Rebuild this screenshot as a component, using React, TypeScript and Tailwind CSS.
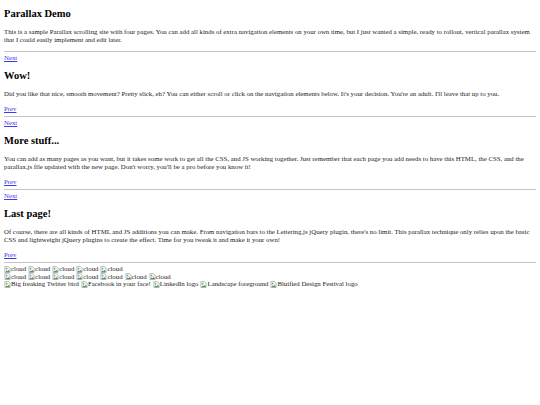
const sections = [
  {
    id: 'one',
    title: 'Parallax Demo',
    text: 'This is a sample Parallax scrolling site with four pages. You can add all kinds of extra navigation elements on your own time, but I just wanted a simple, ready to rollout, vertical parallax system that I could easily implement and edit later.',
    prev: false,
    next: false,
  },
  {
    id: 'two',
    title: 'Wow!',
    text: "Did you like that nice, smooth movement? Pretty slick, eh? You can either scroll or click on the navigation elements below. It's your decision. You're an adult. I'll leave that up to you.",
    prev: true,
    next: true,
  },
  {
    id: 'three',
    title: 'More stuff...',
    text: "You can add as many pages as you want, but it takes some work to get all the CSS, and JS working together. Just remember that each page you add needs to have this HTML, the CSS, and the parallax.js file updated with the new page. Don't worry, you'll be a pro before you know it!",
    prev: true,
    next: true,
  },
  {
    id: 'four',
    title: 'Last page!',
    text: "Of course, there are all kinds of HTML and JS additions you can make. From navigation bars to the Lettering.js jQuery plugin, there's no limit. This parallax technique only relies upon the basic CSS and lightweight jQuery plugins to create the effect. Time for you tweak it and make it your own!",
    prev: true,
    next: true,
  },
];

const logos = [
  'Big freaking Twitter bird',
  'Facebook in your face!',
  'LinkedIn logo',
  'Landscape foreground',
  'Bluified Design Festival logo',
];

// chrome's little broken-image glyph, shrunk
function BrokenImage({ alt }: { alt: string }) {
  return (
    <span className="inline-flex items-end">
      <svg width="7" height="7" viewBox="0 0 16 16">
        <path d="M2 1h8l4 4v10H2z" fill="#f2f2f2" stroke="#a0a0a0" strokeWidth="1.5" />
        <path d="M3 14l3-4 2 2 3-3 2 3v2H3z" fill="#4e9c45" />
        <circle cx="6" cy="6" r="1.8" fill="#6b98d8" />
      </svg>
      {alt}
    </span>
  );
}

export default function App() {
  return (
    <div className="bg-white min-h-[405px] px-1 pt-[8px] text-[6.8px] leading-[8px] text-[#222] font-['Liberation_Serif']">
      {sections.map((s, i) => (
        <div key={s.id}>
          {s.next && (
            <a href="#" className="block text-[#3b3bee] underline">Next</a>
          )}
          <h2 className={i === 0 ? 'text-[10.5px] leading-[12px] font-bold text-black mb-[8px]' : 'text-[10.5px] leading-[12px] font-bold text-black my-[8px]'}>
            {s.title}
          </h2>
          <p className="my-[7px]">{s.text}</p>
          {s.prev && <a href="#" className="block text-[#3b3bee] underline">Prev</a>}
          <hr className="mt-[3px] mb-[2px] border-t border-[#c4c4c4]" />
        </div>
      ))}
      <div className="mt-[2px] leading-[7.5px]">
        <div className="flex gap-[2px] h-[7.5px]">
          {Array.from({ length: 5 }).map((_, i) => (
            <BrokenImage key={i} alt="cloud" />
          ))}
        </div>
        <div className="flex gap-[2px] h-[7.5px]">
          {Array.from({ length: 7 }).map((_, i) => (
            <BrokenImage key={i} alt="cloud" />
          ))}
        </div>
        <div className="flex gap-[2px] h-[7.5px]">
          {logos.map((l) => (
            <BrokenImage key={l} alt={l} />
          ))}
        </div>
      </div>
    </div>
  );
}
